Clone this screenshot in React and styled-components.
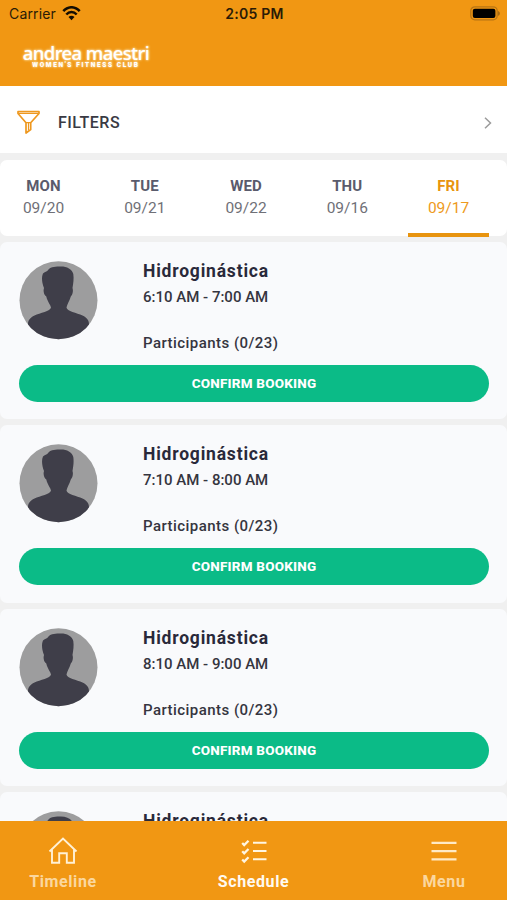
import styled, { createGlobalStyle } from 'styled-components';

const days = [
    { name: 'MON', date: '09/20' },
    { name: 'TUE', date: '09/21' },
    { name: 'WED', date: '09/22' },
    { name: 'THU', date: '09/16' },
    { name: 'FRI', date: '09/17', active: true },
];

const lessons = [
    { id: 1, time: '6:10 AM - 7:00 AM' },
    { id: 2, time: '7:10 AM - 8:00 AM' },
    { id: 3, time: '8:10 AM - 9:00 AM' },
    { id: 4, time: '9:10 AM - 10:00 AM' },
];

const GlobalStyle = createGlobalStyle`
    * {
        box-sizing: border-box;
    }

    body {
        margin: 0;
        font-family: Roboto, 'Liberation Sans', sans-serif;
    }

    button {
        border: 0;
        padding: 0;
        background: none;
        font-family: inherit;
    }
`;

const Screen = styled.div`
    display: flex;
    flex-direction: column;
    width: 507px;
    height: 900px;
    overflow: hidden;
    background: #f0f0f0;
    white-space: nowrap;
`;

const Header = styled.header`
    flex: none;
    height: 86px;
    background: #f19713;
`;

const StatusBar = styled.div`
    display: grid;
    grid-template-columns: 1fr auto 1fr;
    align-items: center;
    height: 27px;
    padding: 0 7px 0 9px;
    font-family: Inter, sans-serif;
    font-size: 14px;
    color: #2a1b06;
`;

const Carrier = styled.div`
    display: flex;
    align-items: center;
    gap: 6px;
    letter-spacing: 0.15px;
`;

const Clock = styled.div`
    font-weight: 600;
    font-size: 14px;
    letter-spacing: 0.25px;
`;

const Battery = styled.svg`
    justify-self: end;
`;

const Logo = styled.div`
    display: flex;
    flex-direction: column;
    align-items: center;
    width: 126px;
    margin: 17px 0 0 23px;
    color: #fff;
    text-shadow: 0 0 2px #ffe9bd, 0 0 3px #ffdc9b;
`;

const LogoName = styled.div`
    font-family: 'Noto Sans', sans-serif;
    font-size: 18.5px;
    font-weight: 500;
    line-height: 18px;
    letter-spacing: -0.6px;
`;

const LogoTagline = styled.div`
    font-size: 6.5px;
    font-weight: 800;
    line-height: 7px;
    letter-spacing: 1.65px;
`;

const Filters = styled.div`
    display: flex;
    flex: none;
    align-items: center;
    height: 67px;
    padding: 6px 14px 0 17px;
    background: #fff;
`;

const FiltersLabel = styled.span`
    flex: 1;
    margin-left: 18px;
    font-size: 16px;
    font-weight: 500;
    letter-spacing: 0.5px;
    color: #393a43;
`;

const Days = styled.div`
    display: flex;
    flex: none;
    justify-content: space-between;
    height: 76px;
    margin-top: 7px;
    padding: 0 18px 0 3px;
    border-radius: 7px;
    background: #fff;
`;

const Day = styled.button`
    display: flex;
    flex-direction: column;
    align-items: center;
    width: 81px;
    height: 77px;
    padding-top: 15px;
    border-bottom: 4px solid ${({ $active }) => ($active ? '#e8940f' : 'transparent')};
    font-size: 15.5px;
    line-height: 22px;
    color: ${({ $active }) => ($active ? '#ee9a20' : '#6f7077')};
`;

const DayName = styled.span`
    font-size: 15px;
    font-weight: 700;
    letter-spacing: 0.1px;
    color: ${({ $active }) => ($active ? '#e8940f' : '#5a5b6c')};
`;

const Lessons = styled.main`
    display: flex;
    flex: 1;
    flex-direction: column;
    gap: 6px;
    min-height: 0;
    padding-top: 6px;
    overflow: hidden;
`;

const Card = styled.article`
    flex: none;
    height: 177.3px;
    padding: 19px 18px 0 19px;
    border-radius: 7px;
    background: #f9fafc;
`;

const Summary = styled.div`
    display: flex;
    gap: 45px;
    height: 104px;
`;

const Info = styled.div`
    color: #35353f;
    font-size: 15px;
    font-weight: 500;
`;

const Title = styled.h2`
    margin: 0;
    font-size: 17.5px;
    font-weight: 700;
    line-height: 21px;
    letter-spacing: 0.8px;
    color: #29293a;
`;

const Time = styled.div`
    margin-top: 5px;
    line-height: 20px;
`;

const Participants = styled.div`
    margin-top: 26px;
    line-height: 20px;
    letter-spacing: 0.45px;
`;

const BookButton = styled.button`
    display: block;
    width: 100%;
    height: 37px;
    padding-bottom: 1px;
    border-radius: 19px;
    background: #0bbb87;
    color: #fff;
    font-size: 13.5px;
    font-weight: 800;
    letter-spacing: 0.2px;
`;

const TabBar = styled.nav`
    display: flex;
    flex: none;
    justify-content: space-between;
    height: 79px;
    padding: 0 13px;
    background: #f19713;
`;

const Tab = styled.button`
    display: flex;
    flex-direction: column;
    align-items: center;
    width: 100px;
    padding-top: 14px;
    font-size: 16px;
    font-weight: 700;
    line-height: 20px;
    letter-spacing: 0.6px;
    color: ${({ $active }) => ($active ? '#fffaf0' : '#fbd79f')};

    svg {
        flex: none;
        margin-bottom: 5px;
    }
`;

const WifiIcon = () => (
    <svg width="19" height="15" viewBox="0 0 19 15" fill="none" stroke="#140d02" strokeWidth="2.5">
        <path d="M1.3 5.2C6-.1 13-.1 17.7 5.2" />
        <path d="M4.3 8.5c3-3.3 7.4-3.3 10.4 0" />
        <path d="M9.5 14.2 6.5 11c1.7-1.7 4.3-1.7 6 0Z" fill="#140d02" stroke="none" />
    </svg>
);

const BatteryIcon = () => (
    <Battery width="30" height="15" viewBox="0 0 30 15">
        <rect x="0.8" y="0.8" width="26.4" height="13" rx="4" fill="none" stroke="#b87514" strokeWidth="1.3" />
        <rect x="2.8" y="2.8" width="22.6" height="9.2" rx="2" fill="#000" />
        <path d="M28 5c2.5.8 2.5 4 0 4.8Z" fill="#a86b12" />
    </Battery>
);

const FunnelIcon = () => (
    <svg width="23" height="25" viewBox="0 0 23 25" fill="none" stroke="#ee981f" strokeWidth="1.7" strokeLinejoin="round">
        <path d="M1 1.7h21v1.8l-8.3 9.2v6.8L9 23V12.7L1 3.5Z" />
        <path d="M2 3.5h19M9 12.7h4.7M11.5 13v7" strokeWidth="1.2" />
    </svg>
);

const ChevronIcon = () => (
    <svg width="11" height="14" viewBox="0 0 11 14" fill="none" stroke="#9b9b9b" strokeWidth="1.5">
        <path d="m3 1.7 5.5 5.3L3 12.3" />
    </svg>
);

const Avatar = () => (
    <svg width="79" height="79" viewBox="0 0 79 79">
        <clipPath id="avatarCircle">
            <circle cx="39.5" cy="39.3" r="39" />
        </clipPath>
        <g clipPath="url(#avatarCircle)">
            <rect width="79" height="79" fill="#9d9d9e" />
            <path
                d="M32 46.500C31.500 43.500 28.500 41 27.300 35.500C25 34 24 30 25 27C23 22 22.300 16 24 12.500C25.500 10.500 28 11 29.500 8.500C32 5.500 37 5.500 42 5.500C48 5.500 53 8 54.300 13C55 18 54.300 22 53.500 27C54.500 30 53.500 34 51.800 35.500C50.500 40 48 43.500 47.500 46.500C47.700 50 58 52 63.500 54.500C68 56.500 70 59.500 70 63V79H9V63C9 59.500 11 56.500 15.500 54.500C21 52 31.500 50 32 46.500Z"
                fill="#3f3e49"
            />
        </g>
    </svg>
);

const HomeIcon = () => (
    <svg width="30" height="32" viewBox="0 0 30 32" fill="none" stroke="#fff1d6" strokeWidth="1.9">
        <path d="m1.5 16.5 13.500-13 13.500 13M4 14.300v13.500h7.200v-9.600h7.600v9.600H26V14.300" />
    </svg>
);

const ScheduleIcon = () => (
    <svg width="30" height="32" viewBox="0 0 30 32" fill="none" stroke="#fff6e2" strokeWidth="2">
        <path d="M14 7.8h13.5M14 16.1h13.5M14 24.3h13.5" />
        <path d="m3.2 8 2 2L9.5 5.7M3.2 16.3l2 2L9.5 14M3.2 24.5l2 2 4.3-4.3" strokeWidth="2.3" />
    </svg>
);

const MenuIcon = () => (
    <svg width="30" height="32" viewBox="0 0 30 32" stroke="#ffeac5" strokeWidth="2.2">
        <path d="M2.5 7.8h25M2.5 16.1h25M2.5 24.3h25" />
    </svg>
);

const LessonCard = ({ time }) => {
    return (
        <Card>
            <Summary>
                <Avatar />
                <Info>
                    <Title>Hidroginástica</Title>
                    <Time>{time}</Time>
                    <Participants>Participants (0/23)</Participants>
                </Info>
            </Summary>
            <BookButton>CONFIRM BOOKING</BookButton>
        </Card>
    );
};

const App = () => {
    return (
        <Screen>
            <GlobalStyle />
            <Header>
                <StatusBar>
                    <Carrier>
                        Carrier <WifiIcon />
                    </Carrier>
                    <Clock>2:05 PM</Clock>
                    <BatteryIcon />
                </StatusBar>
                <Logo>
                    <LogoName>andrea maestri</LogoName>
                    <LogoTagline>WOMEN'S FITNESS CLUB</LogoTagline>
                </Logo>
            </Header>
            <Filters>
                <FunnelIcon />
                <FiltersLabel>FILTERS</FiltersLabel>
                <ChevronIcon />
            </Filters>
            <Days>
                {days.map(({ name, date, active }) => (
                    <Day key={name} $active={active}>
                        <DayName $active={active}>{name}</DayName>
                        {date}
                    </Day>
                ))}
            </Days>
            <Lessons>
                {lessons.map(({ id, time }) => (
                    <LessonCard key={id} time={time} />
                ))}
            </Lessons>
            <TabBar>
                <Tab>
                    <HomeIcon />
                    Timeline
                </Tab>
                <Tab $active>
                    <ScheduleIcon />
                    Schedule
                </Tab>
                <Tab>
                    <MenuIcon />
                    Menu
                </Tab>
            </TabBar>
        </Screen>
    );
};

export default App;
